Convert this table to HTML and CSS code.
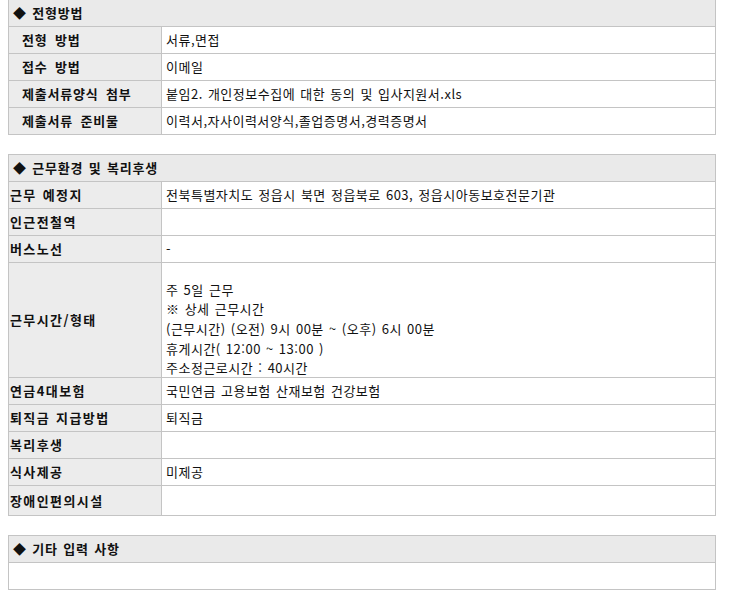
FILE: index.html
```html
<!DOCTYPE html>
<html lang="ko">
<head>
<meta charset="utf-8">
<link rel="stylesheet" href="styles.css">
</head>
<body>
<table class="info first">
  <colgroup><col class="c-lbl"><col class="c-val"></colgroup>
  <tr><th class="head" colspan="2">◆ 전형방법</th></tr>
  <tr><td class="lbl pad">전형 방법</td><td class="val">서류,면접</td></tr>
  <tr><td class="lbl pad">접수 방법</td><td class="val">이메일</td></tr>
  <tr><td class="lbl pad">제출서류양식 첨부</td><td class="val">붙임2. 개인정보수집에 대한 동의 및 입사지원서.xls</td></tr>
  <tr><td class="lbl pad">제출서류 준비물</td><td class="val">이력서,자사이력서양식,졸업증명서,경력증명서</td></tr>
</table>

<table class="info">
  <colgroup><col class="c-lbl"><col class="c-val"></colgroup>
  <tr><th class="head" colspan="2">◆ 근무환경 및 복리후생</th></tr>
  <tr><td class="lbl wide">근무 예정지</td><td class="val">전북특별자치도 정읍시 북면 정읍북로 603, 정읍시아동보호전문기관</td></tr>
  <tr><td class="lbl wide">인근전철역</td><td class="val"></td></tr>
  <tr><td class="lbl wide">버스노선</td><td class="val">-</td></tr>
  <tr><td class="lbl wide">근무시간/형태</td><td class="val"><div class="multi"><div class="ln">주 5일 근무</div><div class="ln">※ 상세 근무시간</div><div class="ln">(근무시간) (오전) 9시 00분 ~ (오후) 6시 00분</div><div class="ln">휴게시간( 12:00 ~ 13:00 )</div><div class="ln">주소정근로시간 : 40시간</div></div></td></tr>
  <tr><td class="lbl wide">연금4대보험</td><td class="val">국민연금 고용보험 산재보험 건강보험</td></tr>
  <tr><td class="lbl wide">퇴직금 지급방법</td><td class="val">퇴직금</td></tr>
  <tr><td class="lbl wide">복리후생</td><td class="val"></td></tr>
  <tr><td class="lbl wide">식사제공</td><td class="val">미제공</td></tr>
  <tr class="last"><td class="lbl wide">장애인편의시설</td><td class="val"></td></tr>
</table>

<table class="info">
  <colgroup><col class="c-lbl"><col class="c-val"></colgroup>
  <tr><th class="head" colspan="2">◆ 기타 입력 사항</th></tr>
  <tr class="empty"><td class="val" colspan="2"></td></tr>
</table>
</body>
</html>
```
FILE: styles.css
```css
html, body {
  margin: 0;
  background: #ffffff;
}
body {
  padding: 0 8px;
  font-family: "Noto Sans CJK KR", "Noto Sans", sans-serif;
  font-size: 13px;
  color: #111111;
}
.info {
  width: 708px;
  border-collapse: collapse;
  margin-top: 19px;
  table-layout: fixed;
}
.info.first {
  margin-top: -1px;
}
.c-lbl {
  width: 153px;
}
.info td, .info th {
  border: 1px solid #c4c4c4;
  padding: 0;
  height: 26px;
  vertical-align: middle;
  line-height: 16px;
  white-space: nowrap;
}
.head {
  background: #eaeaea;
  text-align: left;
  font-weight: bold;
  font-size: 13px;
  letter-spacing: 0.8px;
  word-spacing: 1px;
  padding-left: 4px !important;
}
.lbl {
  background: #ececec;
  font-weight: bold;
  padding-left: 1px !important;
  color: #111111;
  letter-spacing: 0.8px;
  word-spacing: 3px;
}
.lbl.pad {
  padding-left: 13px !important;
}
.lbl.wide {
  letter-spacing: 1.4px;
  word-spacing: 1px;
}
.val {
  padding-left: 4px !important;
  background: #ffffff;
  letter-spacing: 0.5px;
  word-spacing: 1px;
}
.multi {
  display: flex;
  flex-direction: column;
  justify-content: flex-start;
  box-sizing: border-box;
  height: 114px;
  padding-top: 16.5px;
}
.ln {
  height: 19.7px;
  line-height: 19.7px;
  flex: none;
}
.last td {
  height: 29px;
}
.empty td {
  height: 26px;
}
```
